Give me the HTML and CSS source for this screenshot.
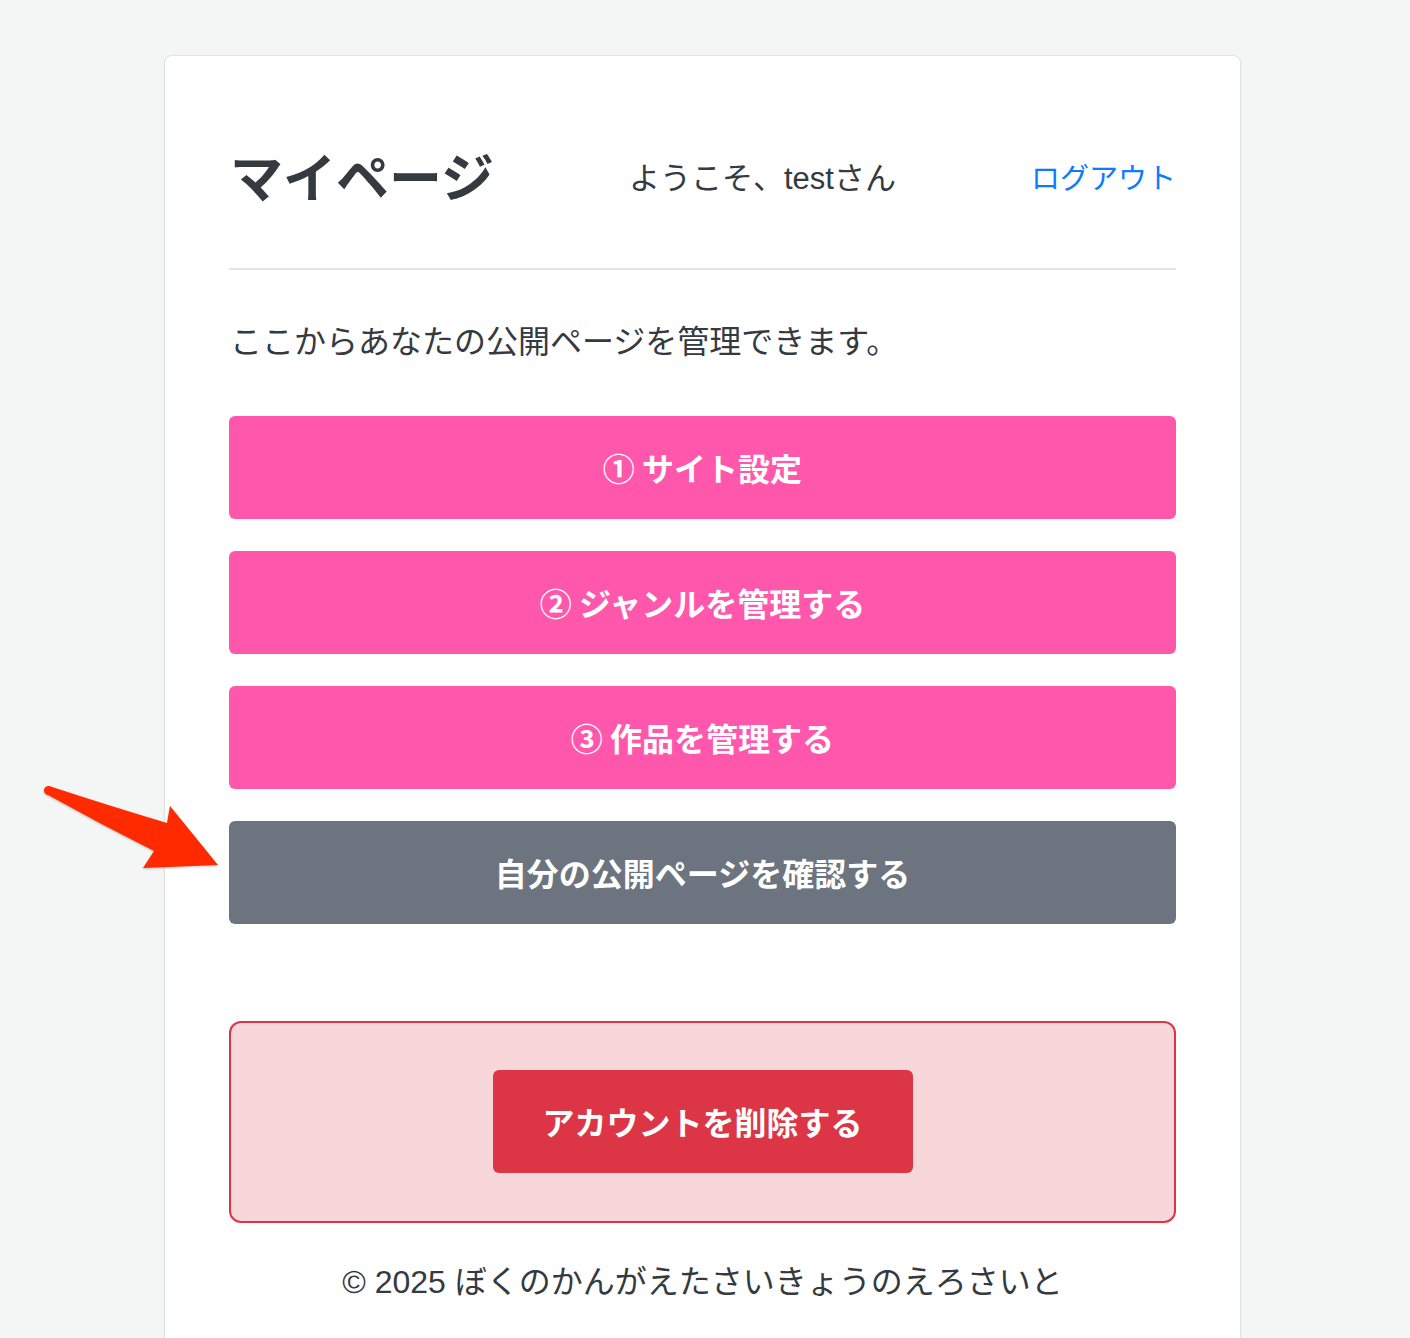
FILE: index.html
```html
<!DOCTYPE html>
<html lang="ja">
<head>
    <meta charset="UTF-8">
    <title>マイページ</title>
    <link rel="stylesheet" href="styles.css">
</head>
<body>

<div class="card">
    <div class="header">
        <h1 class="title">マイページ</h1>
        <span class="welcome">ようこそ、testさん</span>
        <a class="logout" href="#">ログアウト</a>
    </div>
    <p class="lead">ここからあなたの公開ページを管理できます。</p>
    <div class="menu">
        <a class="btn btn-pink" href="#">① サイト設定</a>
        <a class="btn btn-pink" href="#">② ジャンルを管理する</a>
        <a class="btn btn-pink" href="#">③ 作品を管理する</a>
        <a class="btn btn-gray" href="#">自分の公開ページを確認する</a>
    </div>
    <div class="danger">
        <button class="btn btn-red" type="button">アカウントを削除する</button>
    </div>
    <footer class="footer">© 2025 ぼくのかんがえたさいきょうのえろさいと</footer>
</div>

<svg class="arrow" width="240" height="120" viewBox="0 0 240 120">
    <path d="M49,786 Q110,806 167,823 L170,806 L218,865 L143,868 L154,851 Q100,824 48,795 A4.5,4.5 0 0 1 49,786 Z"
          transform="translate(0,-760)" fill="#ff2a00"/>
</svg>

</body>
</html>
```

FILE: styles.css
```css
body {
    margin: 0;
    background-color: #f4f6f5;
    font-family: "Liberation Sans", "Noto Sans CJK JP", sans-serif;
    color: #343a40;
}
.card {
    width: 1077px;
    margin: 55px 0 0 164px;
    padding: 88px 64px 40px 64px;
    box-sizing: border-box;
    background-color: white;
    border: 1px solid #dfe2e6;
    border-radius: 8px;
    box-shadow: 0 1px 3px rgba(0, 0, 0, 0.05);
}
.header {
    display: flex;
    justify-content: space-between;
    align-items: center;
    padding: 0 0 60px 0;
    border-bottom: 2px solid #e2e4e7;
}
.title {
    margin: 0;
    font-family: "Noto Sans CJK JP", sans-serif;
    font-size: 53px;
    font-weight: 700;
    line-height: 1.2;
    padding-left: 1px;
}
.welcome {
    font-size: 31px;
}
.logout {
    font-size: 29px;
    color: #0d7bff;
    text-decoration: none;
}
.lead {
    font-size: 32px;
    line-height: 1.5;
    margin: 48px 0 50px 1px;
}
.menu {
    display: flex;
    flex-direction: column;
    gap: 32px;
}
.btn {
    display: block;
    box-sizing: border-box;
    height: 103px;
    line-height: 103px;
    text-align: center;
    border: none;
    border-radius: 6px;
    color: white;
    font-family: "Noto Sans CJK JP", sans-serif;
    font-size: 32px;
    font-weight: 700;
    text-decoration: none;
}
.btn-pink {
    background-color: #ff57ab;
}
.btn-gray {
    background-color: #6c757f;
}
.danger {
    margin-top: 97px;
    height: 202px;
    box-sizing: border-box;
    background-color: #f8d7da;
    border: 2px solid #dc3545;
    border-radius: 12px;
    display: flex;
    justify-content: center;
    align-items: center;
}
.btn-red {
    width: 420px;
    padding: 0;
    font-size: 32px;
    background-color: #dc3545;
}
.footer {
    margin-top: 35px;
    text-align: center;
    font-size: 32px;
    line-height: 1.5;
}
.arrow {
    position: absolute;
    left: 0;
    top: 760px;
    filter: drop-shadow(0 1px 1px rgba(0, 0, 0, 0.25));
}
```
